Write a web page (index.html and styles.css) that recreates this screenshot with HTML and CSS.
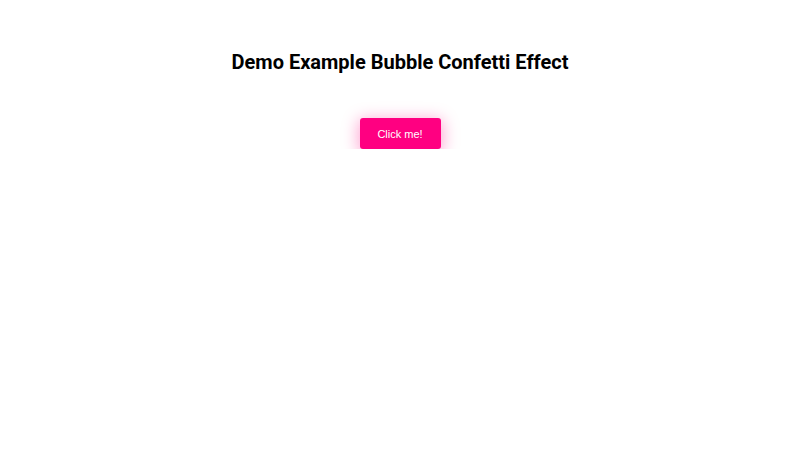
FILE: index.html
```html
<!DOCTYPE html>
<html>
<head>
	<title>Demo Example Bubble Confetti Effect</title>
	<link rel="stylesheet" href="styles.css">
</head>
<body>
	<!-- page heading -->
	<h1 class="title">Demo Example Bubble Confetti Effect</h1>

	<!-- confetti trigger -->
	<div class="wrap">
		<button class="confetti-button">Click me!</button>
	</div>
</body>
</html>
```

FILE: styles.css
```css
body {
	margin: 0;
	background-color: #ffffff;
	font-family: Roboto, "Liberation Sans", sans-serif;
}

.title {
	margin: 48px 0 0 0;
	text-align: center;
	font-size: 20px;
	line-height: 28px;
	font-weight: 700;
	color: #000000;
}

.wrap {
	display: flex;
	justify-content: center;
	margin-top: 42px;
}

.confetti-button {
	width: 81px;
	height: 31px;
	padding: 0;
	border: none;
	border-radius: 3px;
	background-color: #ff0081;
	color: #ffffff;
	font-family: "Liberation Sans", Arial, sans-serif;
	font-size: 11px;
	cursor: pointer;
	box-shadow: 0 3px 16px 2px rgba(255, 0, 130, 0.35);
}
```
